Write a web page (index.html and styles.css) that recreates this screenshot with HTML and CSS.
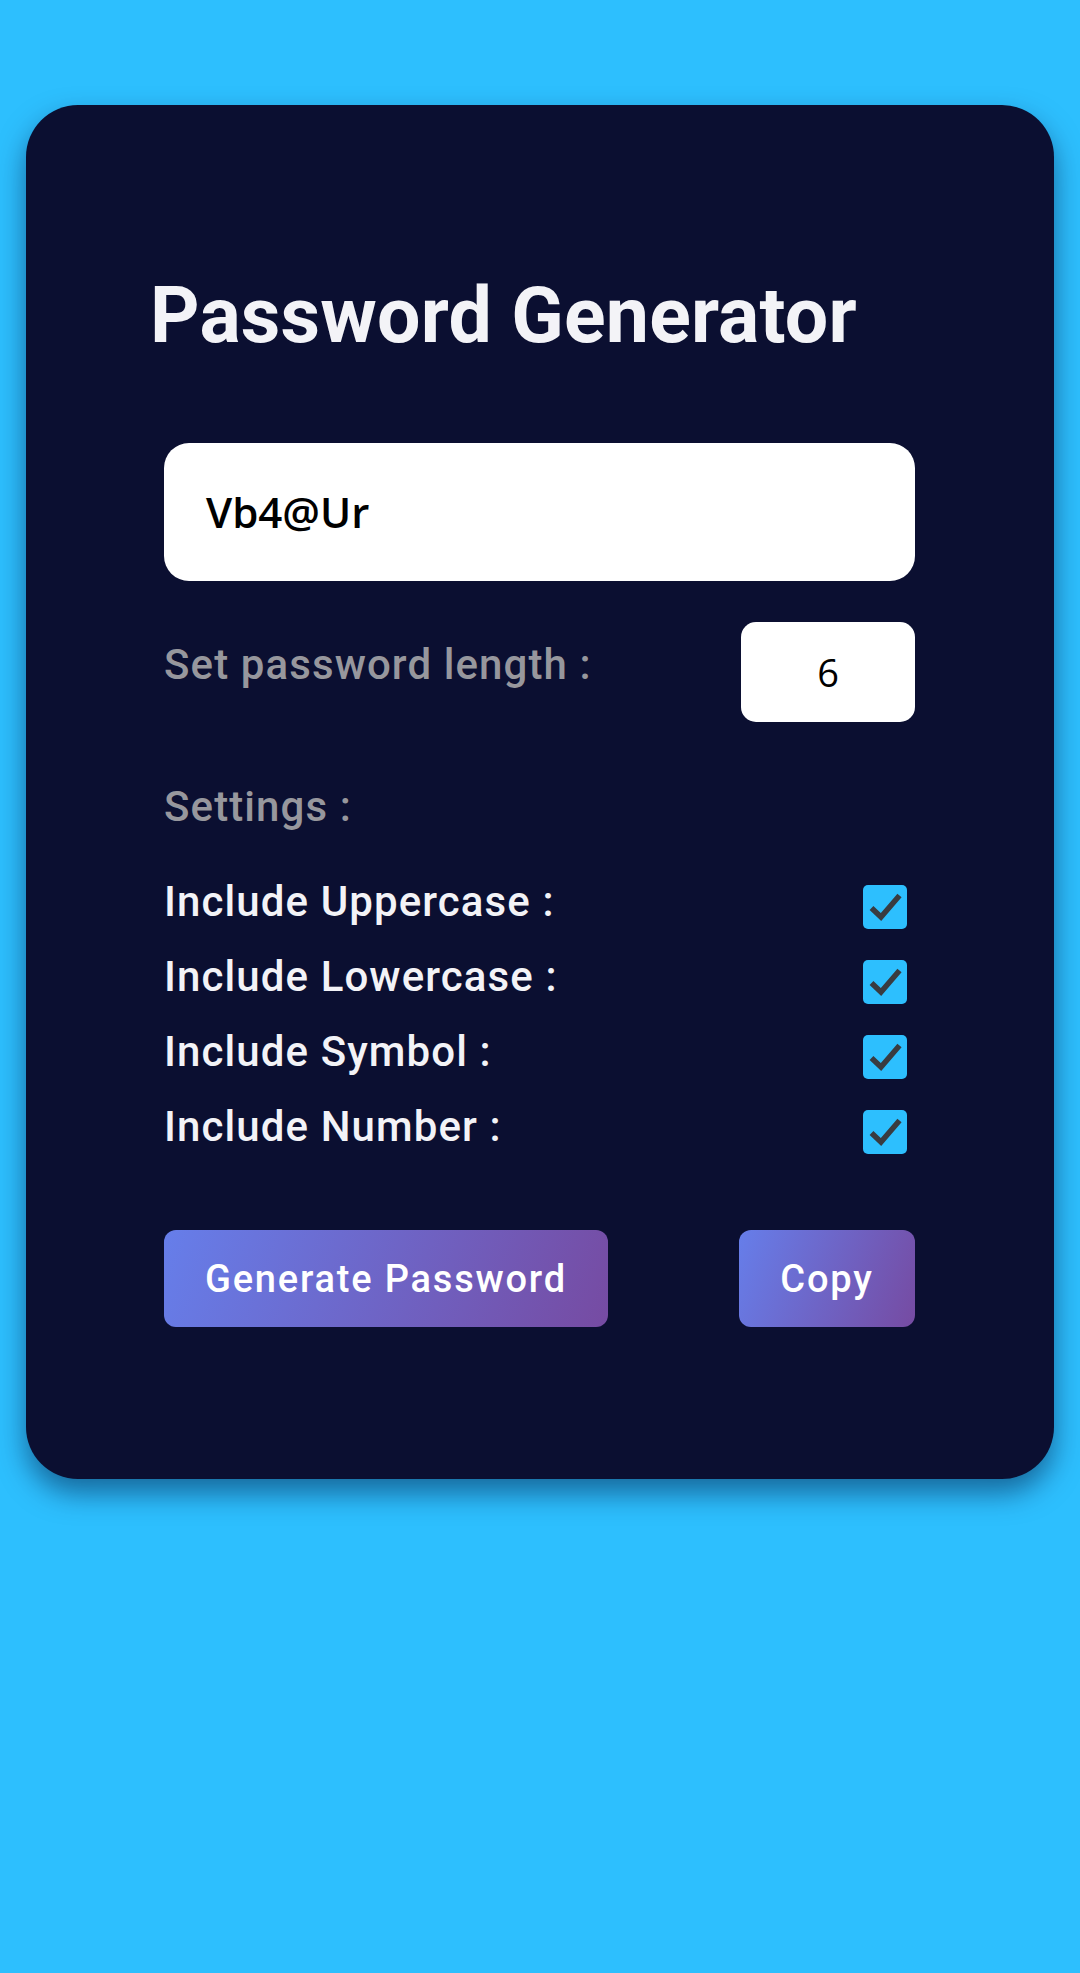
FILE: index.html
```html
<!DOCTYPE html>
<html>
<head>
<meta charset="utf-8">
<link rel="stylesheet" href="styles.css">
</head>
<body>
<main class="card">
  <h1 class="title">Password Generator</h1>
  <div class="output">Vb4@Ur</div>
  <div class="length-row">
    <span class="muted-label length-label">Set password length :</span>
    <div class="length-box">6</div>
  </div>
  <div class="muted-label settings-label">Settings :</div>
  <div class="options">
    <div class="option"><span class="option-label">Include Uppercase :</span><span class="check"><svg viewBox="0 0 44 44" width="44" height="44"><path d="M8.5 23 L18 32 L36.5 10.5" fill="none" stroke="#393b40" stroke-width="5.5" stroke-linejoin="miter" stroke-linecap="butt"/></svg></span></div>
    <div class="option"><span class="option-label">Include Lowercase :</span><span class="check"><svg viewBox="0 0 44 44" width="44" height="44"><path d="M8.5 23 L18 32 L36.5 10.5" fill="none" stroke="#393b40" stroke-width="5.5" stroke-linejoin="miter" stroke-linecap="butt"/></svg></span></div>
    <div class="option"><span class="option-label">Include Symbol :</span><span class="check"><svg viewBox="0 0 44 44" width="44" height="44"><path d="M8.5 23 L18 32 L36.5 10.5" fill="none" stroke="#393b40" stroke-width="5.5" stroke-linejoin="miter" stroke-linecap="butt"/></svg></span></div>
    <div class="option"><span class="option-label">Include Number :</span><span class="check"><svg viewBox="0 0 44 44" width="44" height="44"><path d="M8.5 23 L18 32 L36.5 10.5" fill="none" stroke="#393b40" stroke-width="5.5" stroke-linejoin="miter" stroke-linecap="butt"/></svg></span></div>
  </div>
  <div class="buttons">
    <button class="btn btn-generate">Generate Password</button>
    <button class="btn btn-copy">Copy</button>
  </div>
</main>
</body>
</html>
```
FILE: styles.css
```css
html, body {
  margin: 0;
  padding: 0;
}
body {
  background: #2dbffe;
  min-height: 1973px;
  font-family: Roboto, "Liberation Sans", sans-serif;
  padding-top: 105px;
  box-sizing: border-box;
}
.card {
  margin: 0 26px;
  width: 1028px;
  height: 1374px;
  box-sizing: border-box;
  background: #0b0f31;
  border-radius: 52px;
  box-shadow: 0 14px 28px rgba(0, 20, 60, 0.5);
  padding: 171px 139px 0 138px;
  display: flex;
  flex-direction: column;
}
.title {
  margin: 0 0 0 -14px;
  font-size: 77px;
  line-height: 80px;
  font-weight: 700;
  color: #f3f3f7;
  white-space: nowrap;
  letter-spacing: 0.2px;
}
.output {
  margin-top: 87px;
  height: 138px;
  background: #fff;
  border-radius: 25px;
  padding-left: 42px;
  display: flex;
  align-items: center;
  font-family: "Open Sans", "Noto Sans", sans-serif;
  font-size: 42px;
  font-weight: 600;
  color: #000;
  padding-bottom: 2px;
  box-sizing: border-box;
}
.length-row {
  margin-top: 41px;
  display: flex;
  justify-content: space-between;
  align-items: center;
  height: 100px;
}
.muted-label {
  font-size: 42px;
  line-height: 42px;
  font-weight: 500;
  color: #97979d;
  letter-spacing: 1.1px;
}
.length-label {
  padding-bottom: 15px;
}
.length-box {
  width: 174px;
  height: 100px;
  background: #fff;
  border-radius: 15px;
  display: flex;
  align-items: center;
  justify-content: center;
  font-family: "Open Sans", "Noto Sans", sans-serif;
  font-size: 38px;
  color: #000;
}
.settings-label {
  margin-top: 64px;
}
.options {
  margin-top: 53px;
  display: flex;
  flex-direction: column;
  gap: 27px;
}
.option {
  display: flex;
  justify-content: space-between;
  align-items: flex-start;
  height: 48px;
}
.option-label {
  font-size: 42px;
  line-height: 42px;
  font-weight: 500;
  color: #f3f3f7;
  letter-spacing: 1.1px;
}
.check {
  margin-top: 4px;
  margin-right: 8px;
  width: 44px;
  height: 44px;
  border-radius: 5px;
  background: #2dbffe;
  display: block;
}
.check svg {
  display: block;
}
.buttons {
  margin-top: 76px;
  display: flex;
  justify-content: space-between;
}
.btn {
  height: 97px;
  border: none;
  border-radius: 12px;
  background: linear-gradient(110deg, #667eea 0%, #764ba2 100%);
  color: #fff;
  font-family: Roboto, "Liberation Sans", sans-serif;
  font-size: 38px;
  font-weight: 500;
  letter-spacing: 1.8px;
  padding: 0;
}
.btn-generate {
  width: 444px;
}
.btn-copy {
  width: 176px;
}
```
